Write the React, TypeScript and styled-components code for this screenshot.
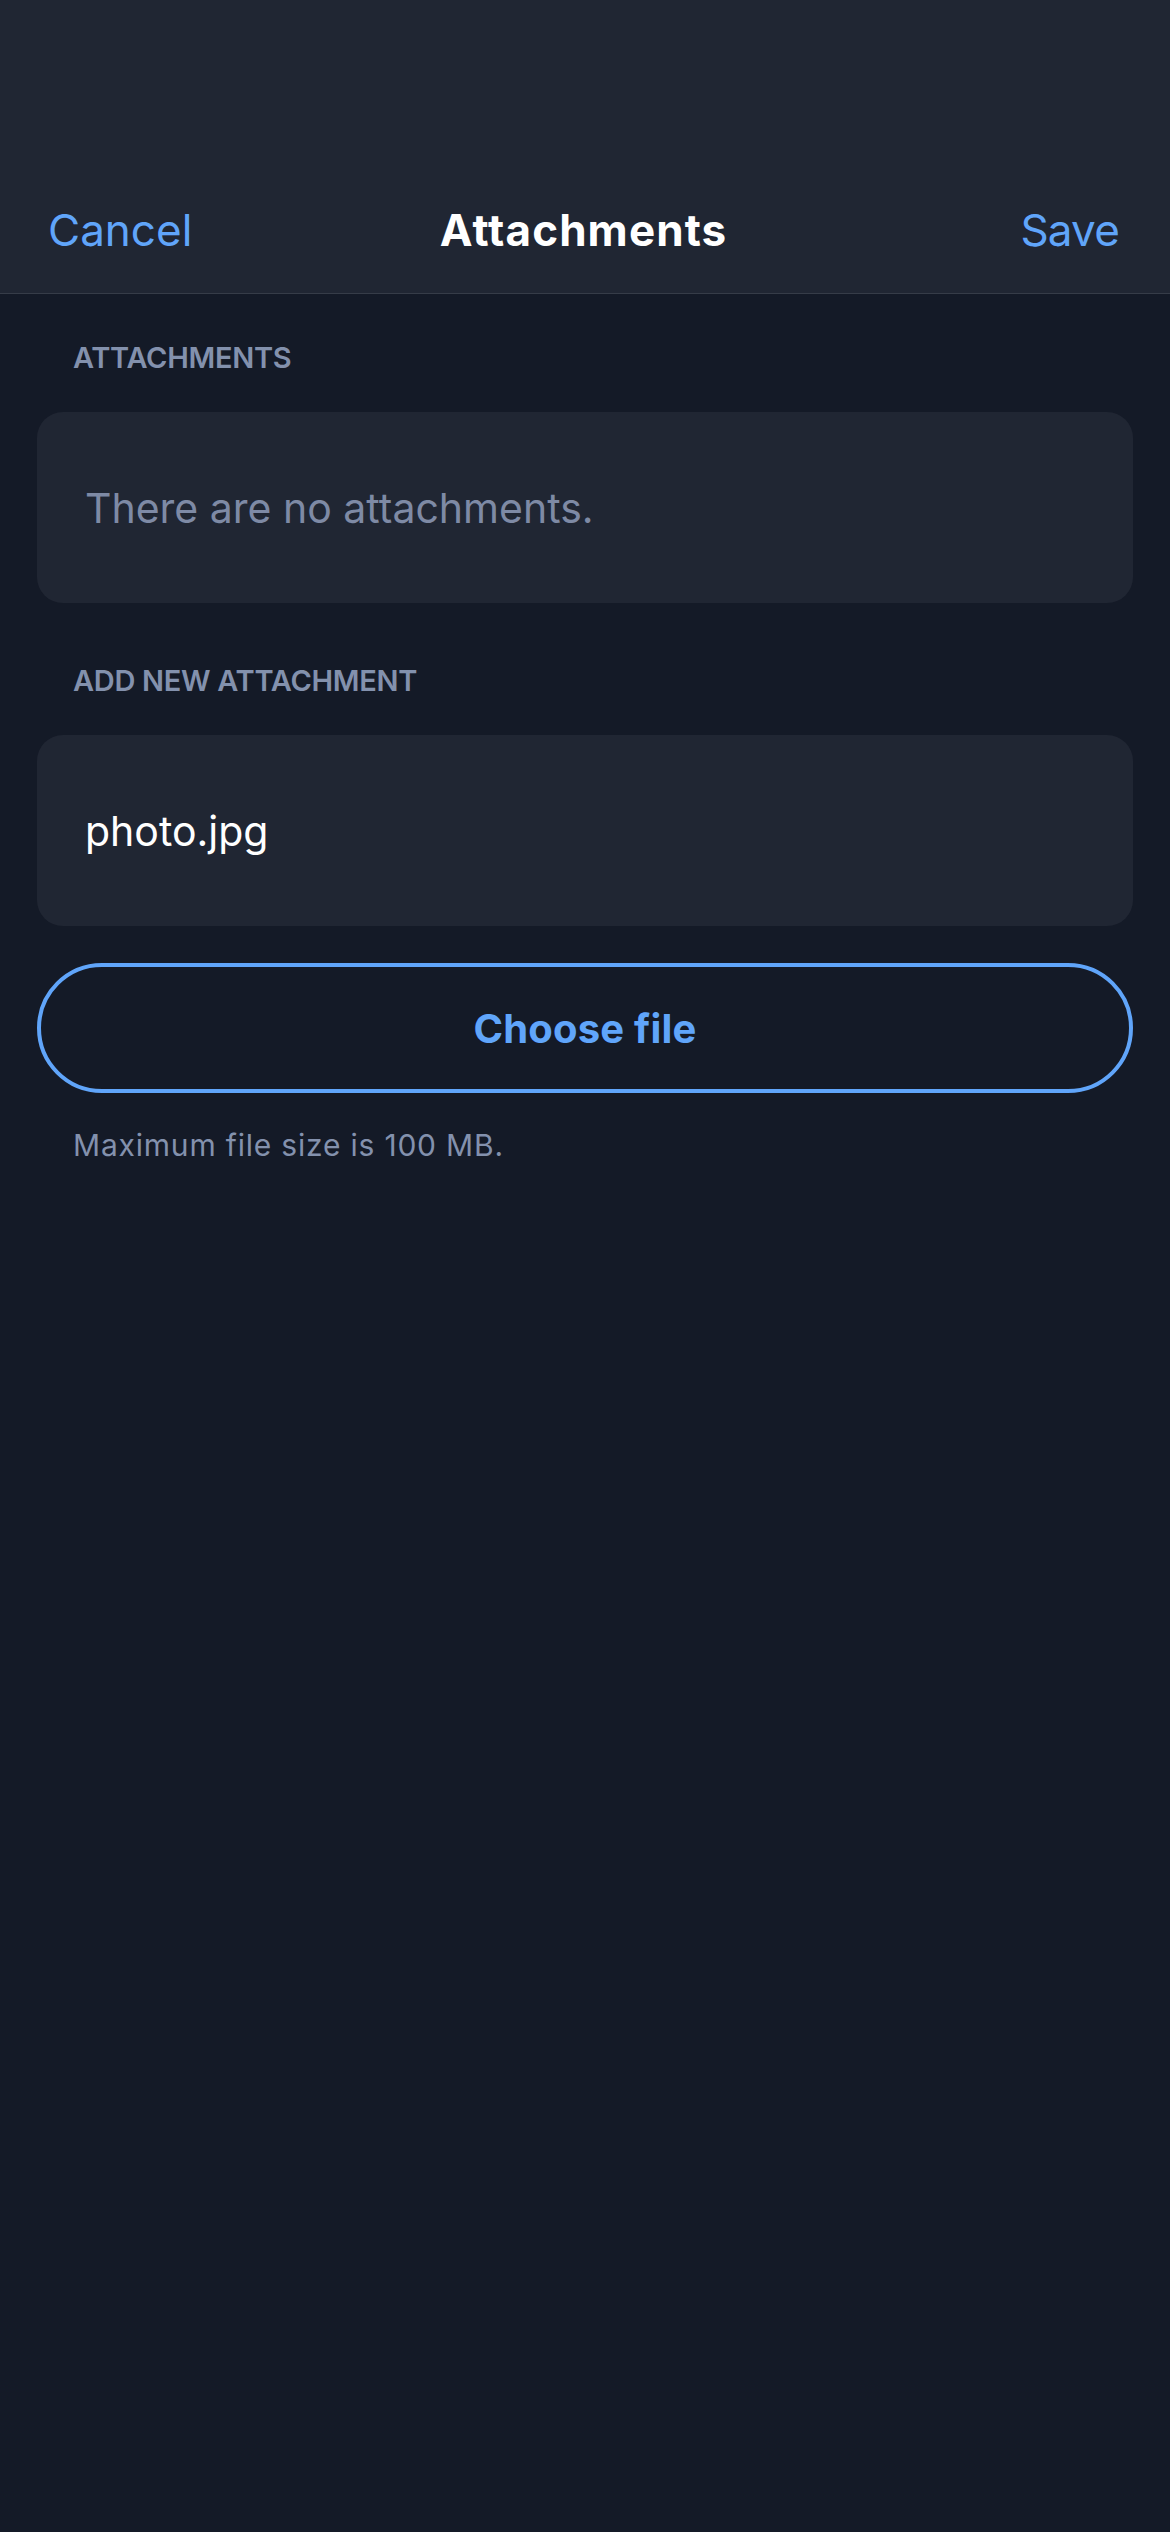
import React from "react";
import styled, { createGlobalStyle } from "styled-components";

const Global = createGlobalStyle`
  html, body { margin: 0; padding: 0; background: #141a27; }
  body { font-family: Inter, "Noto Sans", sans-serif; -webkit-font-smoothing: antialiased; }
  * { box-sizing: border-box; }
`;

const Page = styled.div`
  min-height: 2532px;
  width: 1170px;
  background: #141a27;
  display: flex;
  flex-direction: column;
`;

const Header = styled.header`
  background: #202633;
  border-bottom: 1px solid #363c48;
  padding: 186px 51px 19px 48px;
`;

const HeaderRow = styled.div`
  height: 88px;
  display: grid;
  grid-template-columns: 1fr auto 1fr;
  align-items: center;
`;

const NavButton = styled.button<{ $align: "left" | "right" }>`
  background: none;
  border: none;
  padding: 0;
  color: #60a5fa;
  font-family: inherit;
  font-size: 44px;
  font-weight: 400;
  justify-self: ${(p) => (p.$align === "left" ? "start" : "end")};
  letter-spacing: ${(p) => (p.$align === "right" ? "-0.8px" : "0")};
  cursor: pointer;
`;

const Title = styled.h1`
  margin: 0;
  color: #ffffff;
  font-size: 44px;
  font-weight: 700;
  letter-spacing: 1.1px;
`;

const Content = styled.main`
  padding: 46px 37px 0;
  display: flex;
  flex-direction: column;
`;

const SectionLabel = styled.div<{ $top?: number }>`
  margin: ${(p) => p.$top ?? 0}px 0 36px 36px;
  color: #8391ad;
  font-size: 29px;
  line-height: 36px;
  font-weight: 600;
  text-transform: uppercase;
  letter-spacing: -0.3px;
`;

const Card = styled.div`
  height: 191px;
  background: #202633;
  border-radius: 26px;
  display: flex;
  align-items: center;
  padding: 0 48px;
`;

const CardText = styled.span<{ $muted?: boolean }>`
  color: ${(p) => (p.$muted ? "#7e8aa5" : "#ffffff")};
  font-size: 41px;
  font-weight: 400;
`;

const OutlineButton = styled.button`
  margin-top: 37px;
  height: 130px;
  width: 100%;
  border: 4px solid #60a5fa;
  border-radius: 65px;
  background: transparent;
  color: #60a5fa;
  font-family: inherit;
  font-size: 40px;
  font-weight: 700;
  letter-spacing: 0.2px;
  cursor: pointer;
`;

const Hint = styled.p`
  margin: 34px 0 0 36px;
  color: #8391ad;
  font-size: 30px;
  line-height: 36px;
  font-weight: 400;
  letter-spacing: 0.8px;
`;

export default function App() {
  return (
    <Page>
      <Global />
      <Header>
        <HeaderRow>
          <NavButton $align="left">Cancel</NavButton>
          <Title>Attachments</Title>
          <NavButton $align="right">Save</NavButton>
        </HeaderRow>
      </Header>
      <Content>
        <SectionLabel>Attachments</SectionLabel>
        <Card>
          <CardText $muted>There are no attachments.</CardText>
        </Card>
        <SectionLabel $top={60}>Add new attachment</SectionLabel>
        <Card>
          <CardText>photo.jpg</CardText>
        </Card>
        <OutlineButton>Choose file</OutlineButton>
        <Hint>Maximum file size is 100 MB.</Hint>
      </Content>
    </Page>
  );
}
